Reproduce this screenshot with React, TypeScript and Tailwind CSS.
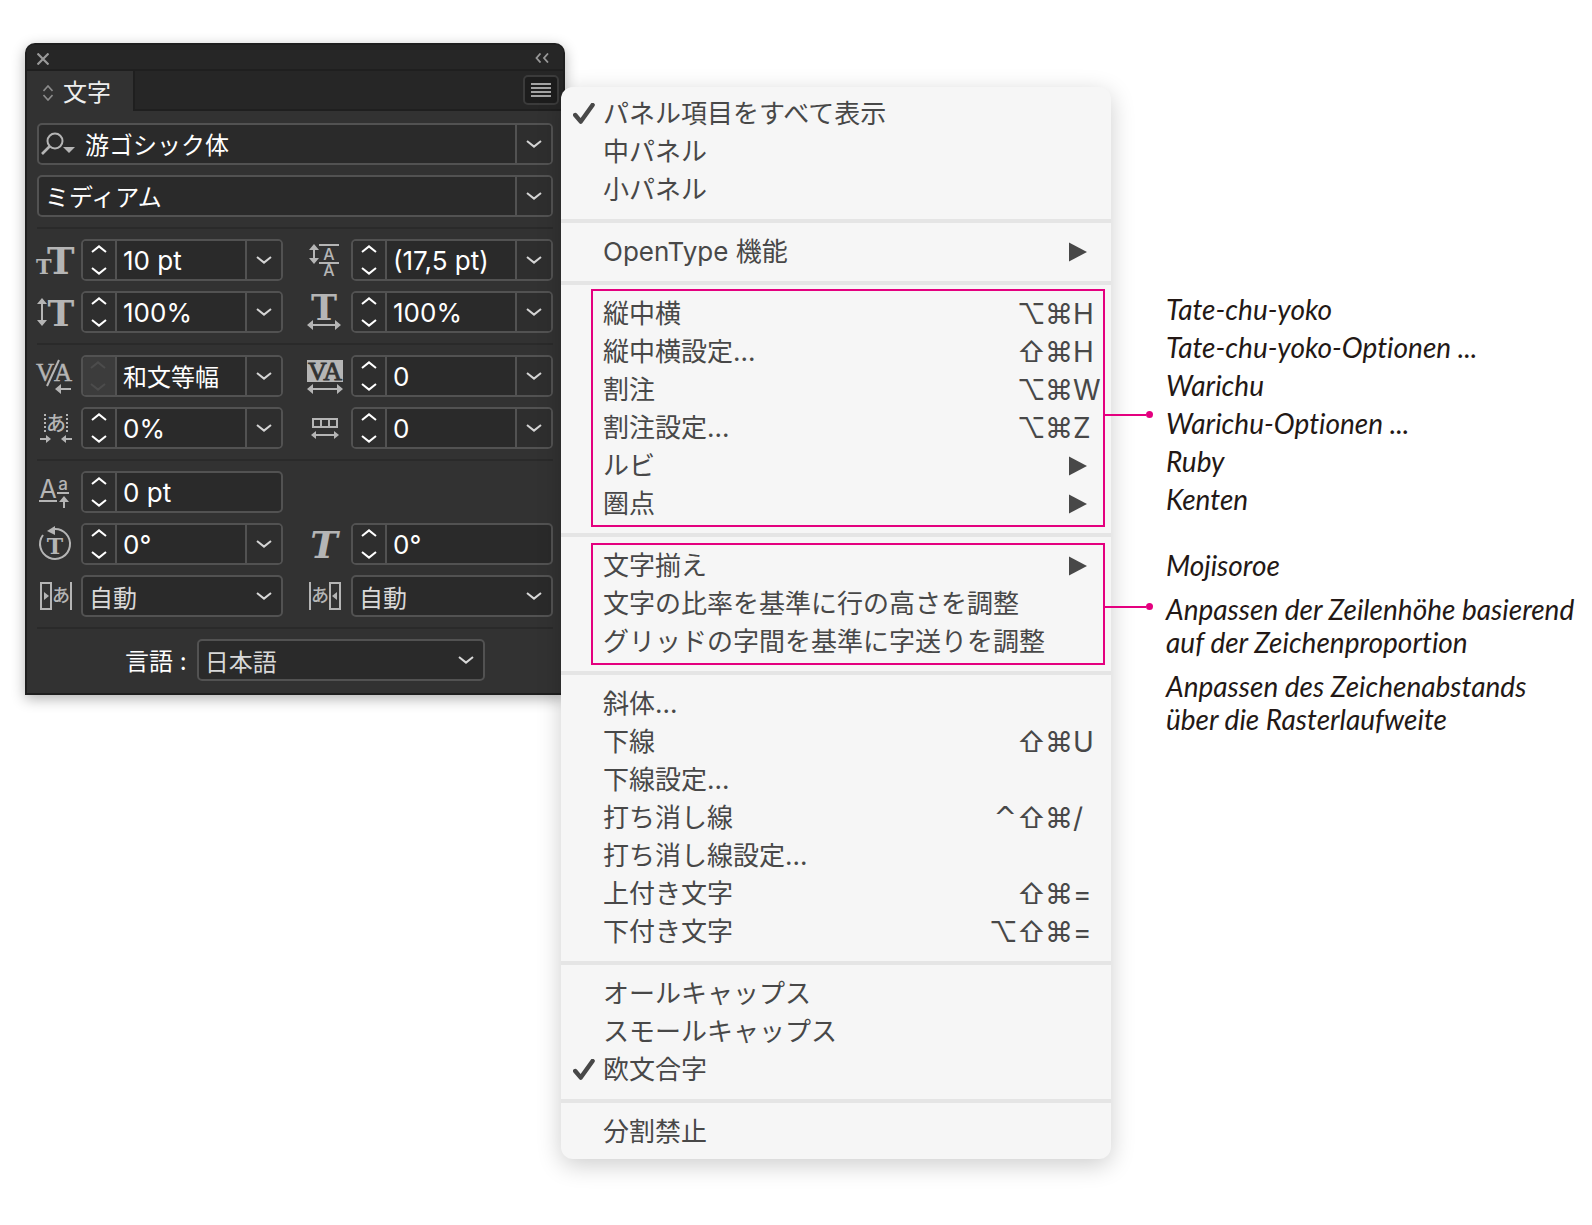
import { useState } from "react";
import type { ReactNode } from "react";

type MenuEntry = {
  label: string;
  checked?: boolean;
  submenu?: boolean;
  mods?: string[];
  shortcut?: string;
};

type MenuSection = {
  items: MenuEntry[];
  frame?: "shortcuts" | "adjust";
};

const menuSections: MenuSection[] = [
  {
    items: [
      { label: "パネル項目をすべて表示", checked: true },
      { label: "中パネル" },
      { label: "小パネル" },
    ],
  },
  { items: [{ label: "OpenType 機能", submenu: true }] },
  {
    frame: "shortcuts",
    items: [
      { label: "縦中横", mods: ["⌥", "⌘"], shortcut: "H" },
      { label: "縦中横設定...", mods: ["⇧", "⌘"], shortcut: "H" },
      { label: "割注", mods: ["⌥", "⌘"], shortcut: "W" },
      { label: "割注設定...", mods: ["⌥", "⌘"], shortcut: "Z" },
      { label: "ルビ", submenu: true },
      { label: "圏点", submenu: true },
    ],
  },
  {
    frame: "adjust",
    items: [
      { label: "文字揃え", submenu: true },
      { label: "文字の比率を基準に行の高さを調整" },
      { label: "グリッドの字間を基準に字送りを調整" },
    ],
  },
  {
    items: [
      { label: "斜体..." },
      { label: "下線", mods: ["⇧", "⌘"], shortcut: "U" },
      { label: "下線設定..." },
      { label: "打ち消し線", mods: ["^", "⇧", "⌘"], shortcut: "/" },
      { label: "打ち消し線設定..." },
      { label: "上付き文字", mods: ["⇧", "⌘"], shortcut: "=" },
      { label: "下付き文字", mods: ["⌥", "⇧", "⌘"], shortcut: "=" },
    ],
  },
  {
    items: [
      { label: "オールキャップス" },
      { label: "スモールキャップス" },
      { label: "欧文合字", checked: true },
    ],
  },
  { items: [{ label: "分割禁止" }] },
];

const commandNotes = [
  "Tate-chu-yoko",
  "Tate-chu-yoko-Optionen ...",
  "Warichu",
  "Warichu-Optionen ...",
  "Ruby",
  "Kenten",
];

const adjustNotes = [
  ["Mojisoroe"],
  ["Anpassen der Zeilenhöhe basierend", "auf der Zeichenproportion"],
  ["Anpassen des Zeichenabstands", "über die Rasterlaufweite"],
];

const slab = "[font-family:'DejaVu_Serif',serif] font-bold";
const serif = "[font-family:'Liberation_Serif',serif]";
const kana = "[font-family:'Noto_Sans_CJK_JP',sans-serif] font-medium";

const Chevron = ({ up = false }: { up?: boolean }) => (
  <svg
    width="16"
    height="8"
    viewBox="0 0 16 8"
    fill="none"
    stroke="currentColor"
    strokeWidth="2"
    aria-hidden="true"
  >
    <path d={up ? "M1 7 8 1.4 15 7" : "M1 1 8 6.6 15 1"} />
  </svg>
);

const Icon = ({ children }: { children: ReactNode }) => (
  <svg
    className="h-[42px] w-9 shrink-0 overflow-visible text-[#b5b5b5]"
    viewBox="0 0 36 42"
    fill="currentColor"
    aria-hidden="true"
  >
    {children}
  </svg>
);

const SizeIcon = () => (
  <Icon>
    <text y="35" className={slab}>
      <tspan x="-1" fontSize="21">T</tspan>
      <tspan x="10" fontSize="37">T</tspan>
    </text>
  </Icon>
);

const LeadingIcon = () => (
  <Icon>
    <path d="M7 5 12 11H8V19H12L7 25 2 19H6V11H2ZM12 5h20v2H12ZM12 23h20v2H12Z" />
    <text fontSize="16" fontWeight="500" textAnchor="middle">
      <tspan x="22" y="21">A</tspan>
      <tspan x="22" y="37">A</tspan>
    </text>
  </Icon>
);

const VerticalScaleIcon = () => (
  <Icon>
    <path d="M5 7 10 13H6V29H10L5 35 0 29H4V13H0Z" />
    <text x="24" y="35" fontSize="36" textAnchor="middle" className={slab}>T</text>
  </Icon>
);

const HorizontalScaleIcon = () => (
  <Icon>
    <text x="17" y="29" fontSize="35" textAnchor="middle" className={slab}>T</text>
    <path d="M0 34 6 29V33H28V29L34 34 28 39V35H6V39Z" />
  </Icon>
);

const KerningIcon = () => (
  <Icon>
    <g stroke="currentColor" strokeWidth="0.5">
      <text x="-1" y="26" fontSize="25" className={serif}>V</text>
      <text x="17" y="26" fontSize="25" className={serif}>A</text>
    </g>
    <path d="M22 5 10 31" stroke="currentColor" strokeWidth="2" />
    <path d="M18 34 24 29V33H34V35H24V39Z" />
  </Icon>
);

const TrackingIcon = () => (
  <Icon>
    <path d="M0 5h36v22H0Z" />
    <text
      x="18"
      y="25"
      fontSize="26"
      textAnchor="middle"
      fill="#323232"
      stroke="#323232"
      strokeWidth="0.8"
      className={serif}
    >
      VA
    </text>
    <path d="M0 34 6 29V33H30V29L36 34 30 39V35H6V39Z" />
  </Icon>
);

const TsumeIcon = () => (
  <Icon>
    <path
      d="M8 7V27M30 7V27"
      stroke="currentColor"
      strokeWidth="2"
      strokeDasharray="2 2"
    />
    <text x="19" y="24" fontSize="20" textAnchor="middle" className={kana}>あ</text>
    <path d="M14 32 9 28V31H3V33H9V36ZM24 32 29 28V31H35V33H29V36Z" />
  </Icon>
);

const GridCountIcon = () => (
  <Icon>
    <path
      d="M6 12H30V20H6ZM14 12V20M22 12V20"
      fill="none"
      stroke="currentColor"
      strokeWidth="2"
    />
    <path d="M4 28 9 24V27H27V24L32 28 27 32V29H9V32Z" />
  </Icon>
);

const BaselineIcon = () => (
  <Icon>
    <text x="11" y="27" fontSize="25" textAnchor="middle">A</text>
    <text x="26" y="19" fontSize="17" fontWeight="500" textAnchor="middle">a</text>
    <path d="M2 29H20V31H2ZM20 21H32V23H20ZM27 25 32 31H28V37H26V31H22Z" />
  </Icon>
);

const RotationIcon = () => (
  <Icon>
    <path
      d="M6 12A15 15 0 1 0 17 6"
      fill="none"
      stroke="currentColor"
      strokeWidth="2"
    />
    <path d="M10 8 18 3V12Z" />
    <text x="18" y="31" fontSize="22" textAnchor="middle" className={slab}>T</text>
  </Icon>
);

const SkewIcon = () => (
  <Icon>
    <text x="17" y="35" fontSize="37" textAnchor="middle" className={`${slab} italic`}>
      T
    </text>
  </Icon>
);

const SpaceBeforeIcon = () => (
  <Icon>
    <path d="M4 8H14V34H4Z" fill="none" stroke="currentColor" strokeWidth="2" />
    <path d="M7 17 12 21 7 25ZM33 7H35V35H33Z" />
    <text x="24" y="27" fontSize="18" textAnchor="middle" className={kana}>あ</text>
  </Icon>
);

const SpaceAfterIcon = () => (
  <Icon>
    <path d="M23 8H33V34H23Z" fill="none" stroke="currentColor" strokeWidth="2" />
    <path d="M30 17 25 21 30 25ZM2 7H4V35H2Z" />
    <text x="13" y="27" fontSize="18" textAnchor="middle" className={kana}>あ</text>
  </Icon>
);

const SearchIcon = () => (
  <svg
    className="ml-0.5 shrink-0 self-center text-[#b5b5b5]"
    width="38"
    height="24"
    viewBox="0 0 38 24"
    fill="none"
    stroke="currentColor"
    strokeWidth="2"
    aria-hidden="true"
  >
    <circle cx="14" cy="9" r="7.5" />
    <path d="M8.5 14.5 1 22" strokeWidth="2.6" />
    <path d="M22 15H34L28 21Z" fill="currentColor" stroke="none" />
  </svg>
);

const Divider = () => <hr className="h-0.5 border-0 bg-[#2a2a2a]" />;

type ComboProps = {
  label: string;
  initial: string;
  numeric?: boolean;
  stepper?: boolean;
  disabledStepper?: boolean;
  dropdown?: boolean;
  prefix?: ReactNode;
};

const Combo = ({
  label,
  initial,
  numeric = false,
  stepper = false,
  disabledStepper = false,
  dropdown = true,
  prefix,
}: ComboProps) => {
  const [value, setValue] = useState(initial);

  return (
    <div className="flex h-[42px] min-w-0 flex-1 overflow-hidden rounded-[5px] border-2 border-[#525252] bg-[#2a2a2a]">
      {stepper && (
        <div
          className={
            disabledStepper
              ? "-my-0.5 -ml-0.5 flex w-9 shrink-0 flex-col border-r-2 border-[#525252] bg-[#3c3c3c] py-0.5 text-[#4c4c4c]"
              : "flex w-[34px] shrink-0 flex-col border-r-2 border-[#525252] bg-[#2e2e2e] text-white"
          }
        >
          <button
            type="button"
            aria-label={`${label} +`}
            disabled={disabledStepper}
            className="grid flex-1 place-items-center pb-1"
          >
            <Chevron up />
          </button>
          <button
            type="button"
            aria-label={`${label} -`}
            disabled={disabledStepper}
            className="grid flex-1 place-items-center pt-0.5"
          >
            <Chevron />
          </button>
        </div>
      )}
      {prefix}
      <input
        aria-label={label}
        value={value}
        onChange={(event) => setValue(event.target.value)}
        className={
          numeric
            ? "min-w-0 flex-1 bg-transparent px-1.5 text-[26px] text-white outline-none"
            : "min-w-0 flex-1 bg-transparent px-1.5 pt-1 text-2xl text-white outline-none"
        }
      />
      {dropdown && (
        <button
          type="button"
          aria-label={`${label} ▾`}
          className="grid w-9 shrink-0 place-items-center border-l-2 border-[#525252] bg-[#2e2e2e] text-[#d4d4d4]"
        >
          <Chevron />
        </button>
      )}
    </div>
  );
};

const Select = ({ id, label, value }: { id: string; label?: string; value: string }) => (
  <div className="relative h-[42px] min-w-0 flex-1 rounded-[5px] border-2 border-[#525252] bg-[#2a2a2a] text-[#d8d8d8]">
    <select
      id={id}
      aria-label={label}
      defaultValue={value}
      className="h-full w-full appearance-none bg-transparent pt-1 pl-1.5 text-2xl leading-9 outline-none"
    >
      <option>{value}</option>
    </select>
    <span className="pointer-events-none absolute inset-y-0 right-[9px] flex items-center">
      <Chevron />
    </span>
  </div>
);

const Field = ({ icon, children }: { icon: ReactNode; children: ReactNode }) => (
  <div className="flex items-center gap-2">
    {icon}
    {children}
  </div>
);

const FieldGrid = ({ children }: { children: ReactNode }) => (
  <div className="grid grid-cols-2 gap-x-6 gap-y-2.5">{children}</div>
);

const CharacterPanel = () => (
  <section className="w-[540px] shrink-0 rounded-t-[10px] border-2 border-[#1f1f1f] bg-[#323232] shadow-[0_4px_14px_rgba(0,0,0,0.3)]">
    <header className="rounded-t-lg bg-[#262626]">
      <div className="flex h-[26px] items-center justify-between border-b-2 border-[#1f1f1f] px-2.5 pt-1 text-[#999]">
        <button type="button" aria-label="閉じる">
          <svg width="12" height="12" viewBox="0 0 12 12" stroke="currentColor" strokeWidth="2.2">
            <path d="M0.5 0.5 11.5 11.5M11.5 0.5 0.5 11.5" />
          </svg>
        </button>
        <button type="button" aria-label="折りたたむ" className="mr-1 pb-0.5">
          <svg width="14" height="10" viewBox="0 0 14 10" fill="none" stroke="currentColor" strokeWidth="1.8">
            <path d="M5.5 0.5 1.5 5 5.5 9.5M13 0.5 9 5 13 9.5" />
          </svg>
        </button>
      </div>
      <div className="flex h-10 items-stretch justify-between">
        <h1 className="flex w-[106px] items-center gap-2.5 bg-[#323232] pt-1 pl-4 text-2xl font-normal text-[#eee]">
          <svg
            className="text-[#8c8c8c]"
            width="10"
            height="16"
            viewBox="0 0 10 16"
            fill="none"
            stroke="currentColor"
            strokeWidth="1.6"
            aria-hidden="true"
          >
            <path d="M0.5 6 5 1 9.5 6M0.5 10 5 15 9.5 10" />
          </svg>
          文字
        </h1>
        <div className="flex flex-1 items-center justify-end border-b-2 border-l-2 border-[#1f1f1f] pr-1">
          <button
            type="button"
            aria-label="パネルメニュー"
            className="grid h-[30px] w-9 place-items-center rounded-[5px] border-2 border-[#3b3b3b] bg-[#1d1d1d] text-[#a3a3a3]"
          >
            <svg width="20" height="14" viewBox="0 0 20 14" fill="currentColor">
              <path d="M0 0h20v2H0ZM0 4h20v2H0ZM0 8h20v2H0ZM0 12h20v2H0Z" />
            </svg>
          </button>
        </div>
      </div>
    </header>

    <div className="flex flex-col gap-2.5 px-2.5 py-3">
      <div className="flex">
        <Combo label="フォント" initial="游ゴシック体" prefix={<SearchIcon />} />
      </div>
      <div className="flex">
        <Combo label="スタイル" initial="ミディアム" />
      </div>
      <Divider />
      <FieldGrid>
        <Field icon={<SizeIcon />}>
          <Combo label="フォントサイズ" initial="10 pt" numeric stepper />
        </Field>
        <Field icon={<LeadingIcon />}>
          <Combo label="行送り" initial="(17,5 pt)" numeric stepper />
        </Field>
        <Field icon={<VerticalScaleIcon />}>
          <Combo label="垂直比率" initial="100%" numeric stepper />
        </Field>
        <Field icon={<HorizontalScaleIcon />}>
          <Combo label="水平比率" initial="100%" numeric stepper />
        </Field>
      </FieldGrid>
      <Divider />
      <FieldGrid>
        <Field icon={<KerningIcon />}>
          <Combo label="カーニング" initial="和文等幅" stepper disabledStepper />
        </Field>
        <Field icon={<TrackingIcon />}>
          <Combo label="トラッキング" initial="0" numeric stepper />
        </Field>
        <Field icon={<TsumeIcon />}>
          <Combo label="文字ツメ" initial="0%" numeric stepper />
        </Field>
        <Field icon={<GridCountIcon />}>
          <Combo label="ジャスティフィケーション" initial="0" numeric stepper />
        </Field>
      </FieldGrid>
      <Divider />
      <FieldGrid>
        <Field icon={<BaselineIcon />}>
          <Combo label="ベースラインシフト" initial="0 pt" numeric stepper dropdown={false} />
        </Field>
        <div />
        <Field icon={<RotationIcon />}>
          <Combo label="文字回転" initial="0°" numeric stepper />
        </Field>
        <Field icon={<SkewIcon />}>
          <Combo label="歪み" initial="0°" numeric stepper dropdown={false} />
        </Field>
        <Field icon={<SpaceBeforeIcon />}>
          <Select id="space-before" label="文字前のアキ量" value="自動" />
        </Field>
        <Field icon={<SpaceAfterIcon />}>
          <Select id="space-after" label="文字後のアキ量" value="自動" />
        </Field>
      </FieldGrid>
      <Divider />
      <div className="flex items-center gap-2.5 pr-[68px] pl-[88px]">
        <label htmlFor="language" className="pt-1 text-2xl whitespace-nowrap text-white">
          言語 :
        </label>
        <Select id="language" value="日本語" />
      </div>
    </div>
  </section>
);

const MenuRow = ({ item }: { item: MenuEntry }) => (
  <button
    type="button"
    role="menuitem"
    className="flex h-[38px] w-full items-center text-left"
  >
    <span className="flex w-[42px] shrink-0 pl-3">
      {item.checked && (
        <svg
          width="22"
          height="22"
          viewBox="0 0 22 22"
          fill="none"
          stroke="currentColor"
          strokeWidth="4.4"
          strokeLinecap="round"
          strokeLinejoin="round"
          aria-hidden="true"
        >
          <path d="M2.2 12 7.8 18.6 19.6 2" />
        </svg>
      )}
    </span>
    <span className="flex-1 whitespace-nowrap">{item.label}</span>
    {item.submenu && (
      <svg className="mr-6" width="18" height="20" viewBox="0 0 18 20" fill="currentColor" aria-hidden="true">
        <path d="M0 0.5 18 10 0 19.5Z" />
      </svg>
    )}
    {item.shortcut && (
      <kbd className="flex text-[28px] [font-family:inherit]">
        {item.mods?.map((mod) => (
          <span
            key={mod}
            className={
              mod === "^"
                ? "w-7 text-right [font-family:'DejaVu_Sans',sans-serif]"
                : "w-7 text-center"
            }
          >
            {mod}
          </span>
        ))}
        <span className="w-[38px]">{item.shortcut}</span>
      </kbd>
    )}
  </button>
);

// pink frame with a leader line that points at the translation column
const Frame = ({ kind }: { kind: "shortcuts" | "adjust" }) => (
  <div
    className={
      kind === "shortcuts"
        ? "pointer-events-none absolute top-1 right-1.5 bottom-1.5 left-[30px] border-2 border-[#e4007f]"
        : "pointer-events-none absolute top-1.5 right-1.5 bottom-1.5 left-[30px] border-2 border-[#e4007f]"
    }
  >
    <span
      className={
        kind === "shortcuts"
          ? "absolute top-[120px] left-full flex w-[50px] items-center"
          : "absolute top-[58px] left-full flex w-[50px] items-center"
      }
    >
      <span className="h-0.5 flex-1 bg-[#e4007f]" />
      <span className="size-[7px] rounded-full bg-[#e4007f]" />
    </span>
  </div>
);

const PanelMenu = () => (
  <div
    role="menu"
    className="relative mt-11 -ml-1 w-[550px] shrink-0 rounded-xl bg-[#f6f6f6] text-[26px] leading-[38px] text-[#484848] shadow-[0_6px_24px_rgba(0,0,0,0.2)]"
  >
    {menuSections.map((section) => (
      <div
        key={section.items[0].label}
        role="group"
        className="relative border-b-4 border-[#e5e5e5] py-2.5 first:pt-2 last:border-b-0 last:pb-2"
      >
        {section.items.map((item) => (
          <MenuRow key={item.label} item={item} />
        ))}
        {section.frame && <Frame kind={section.frame} />}
      </div>
    ))}
  </div>
);

const Notes = () => (
  <aside
    lang="de"
    className="mt-[247px] ml-[55px] text-[28px] whitespace-nowrap text-[#231815] italic [font-family:Lato,sans-serif] [font-variant-ligatures:none]"
  >
    <ul className="leading-[38px]">
      {commandNotes.map((note) => (
        <li key={note}>{note}</li>
      ))}
    </ul>
    <ul className="mt-[31px] flex flex-col gap-[11px] leading-[33px]">
      {adjustNotes.map((lines) => (
        <li key={lines[0]}>
          {lines.map((line) => (
            <span key={line} className="block">
              {line}
            </span>
          ))}
        </li>
      ))}
    </ul>
  </aside>
);

const App = () => {
  return (
    <main
      lang="ja"
      className="flex min-h-screen items-start bg-white px-[25px] pt-[43px] pb-16 [font-family:Inter,'Noto_Sans_CJK_JP',sans-serif]"
    >
      <CharacterPanel />
      <PanelMenu />
      <Notes />
    </main>
  );
};

export default App;
